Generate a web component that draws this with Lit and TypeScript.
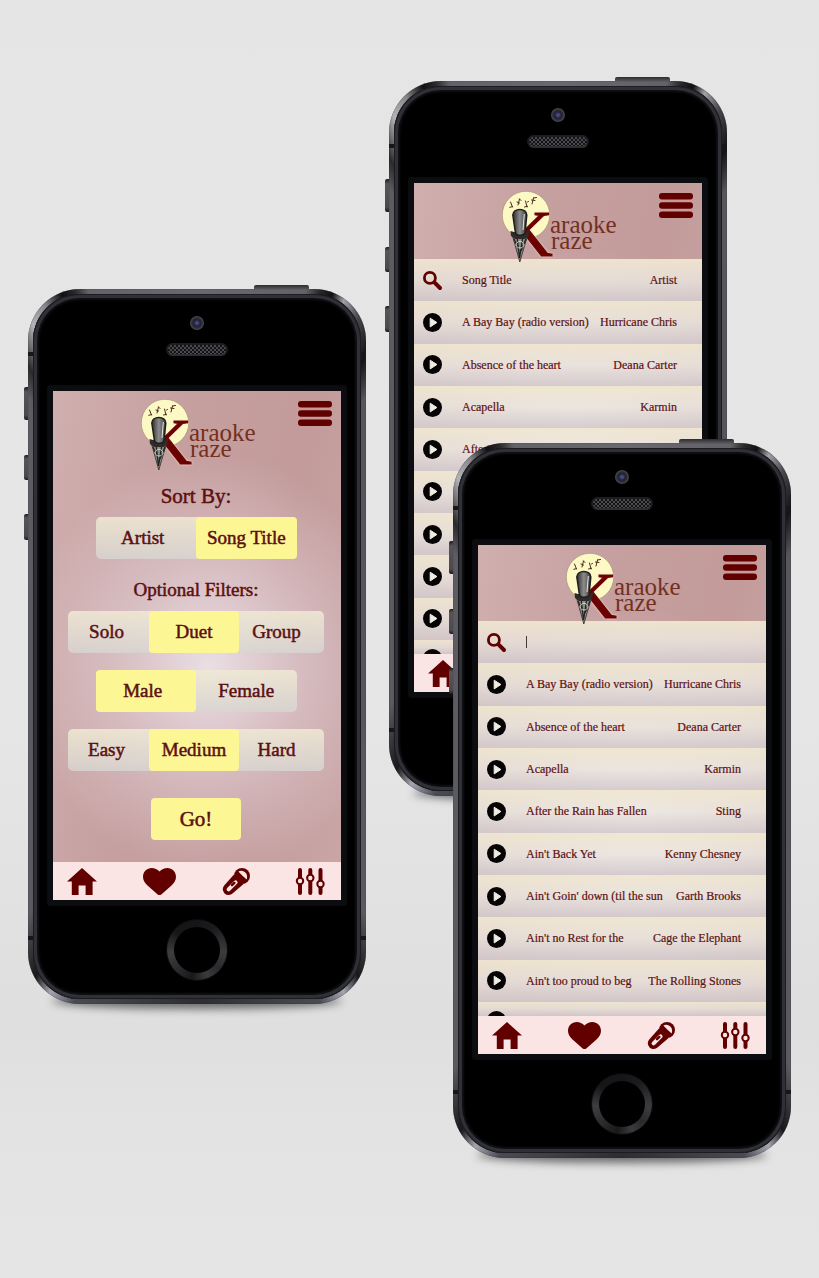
import { LitElement, html, css, svg, nothing } from "lit";
import { customElement, property, state } from "lit/decorators.js";

type Song = { title: string; artist: string };

const SONGS: Song[] = [
  { title: "A Bay Bay (radio version)", artist: "Hurricane Chris" },
  { title: "Absence of the heart", artist: "Deana Carter" },
  { title: "Acapella", artist: "Karmin" },
  { title: "After the Rain has Fallen", artist: "Sting" },
  { title: "Ain't Back Yet", artist: "Kenny Chesney" },
  { title: "Ain't Goin' down (til the sun", artist: "Garth Brooks" },
  { title: "Ain't no Rest for the", artist: "Cage the Elephant" },
  { title: "Ain't too proud to beg", artist: "The Rolling Stones" },
  { title: "", artist: "" },
];

const ICONS = {
  home: { w: 30, h: 27, art: svg`<path d="M15 0 30 13.4H25.6V27H18.6V17.6H11.6V27H4.8V13.4H0Z"/>` },
  heart: {
    w: 33,
    h: 27,
    art: svg`<path d="M16.5 3.6C18.6 1.2 21.400 0 24.200 0 29.200 0 33 3.800 33 8.800 33 12.400 31.200 15 28.500 17.600L18.300 26.400Q16.500 27.600 14.700 26.400L4.500 17.600C1.800 15 0 12.400 0 8.800 0 3.800 3.800 0 8.800 0 11.600 0 14.400 1.200 16.500 3.600Z"/>`,
  },
  mic: {
    w: 27,
    h: 27,
    art: svg`<circle cx="19.000" cy="8" r="8"/>
      <path d="M11 6.500 20.600 16 9.800 25.300A5.800 5.800 0 0 1 1.400 17.200Z"/>
      <path d="M5.600 21.400 12.600 14.400" fill="none" stroke="#fae4e4" stroke-width="4" stroke-linecap="round"/>
      <path d="M9 17.200 11.400 14.900" fill="none" stroke="#620000" stroke-width="2.400" stroke-linecap="round"/>
      <path d="M15.400 3.600C19.600 0.800 26 5.400 23.600 11.400 21.600 9.800 17.400 6.200 15.400 3.600Z" fill="#fae4e4"/>`,
  },
  sliders: {
    w: 29,
    h: 27,
    art: svg`<path d="M4 2V25M14.300 2V25M24.500 2V25" fill="none" stroke="#620000" stroke-width="4" stroke-linecap="round"/>
      <g fill="#fae4e4" stroke="#620000" stroke-width="2">
        <circle cx="4" cy="13" r="3.200"/><circle cx="14.300" cy="10" r="3.200"/><circle cx="24.500" cy="16" r="3.200"/>
      </g>`,
  },
  search: {
    w: 19,
    h: 19,
    art: svg`<circle cx="6.900" cy="6.900" r="5.500" fill="none" stroke="#620000" stroke-width="2.800"/>
      <path d="M11.400 11.400 17 17" fill="none" stroke="#620000" stroke-width="4" stroke-linecap="round"/>`,
  },
  play: {
    w: 19,
    h: 19,
    art: svg`<circle cx="9.500" cy="9.500" r="9.500" fill="#050304"/>
      <path d="M7.200 5.200 13.900 9.500 7.200 13.900Z" fill="#f1ece2" stroke="#f1ece2" stroke-width="1" stroke-linejoin="round"/>`,
  },
  menu: {
    w: 34,
    h: 25,
    art: svg`<rect width="34" height="6.400" rx="3"/><rect y="9.300" width="34" height="6.400" rx="3"/><rect y="18.600" width="34" height="6.400" rx="3"/>`,
  },
};

type IconName = keyof typeof ICONS;

const icon = (name: IconName) => {
  const { w, h, art } = ICONS[name];
  return html`<svg class="icon" width=${w} height=${h} viewBox="0 0 ${w} ${h}" aria-hidden="true">${art}</svg>`;
};

const controls = css`
  * {
    box-sizing: border-box;
  }
  button,
  input {
    font: inherit;
    color: inherit;
    margin: 0;
    padding: 0;
    border: 0;
    background: none;
  }
  button {
    cursor: pointer;
  }
  .icon {
    display: block;
    fill: #620000;
    overflow: visible;
  }
`;

/** The handset: metal rim, side keys, speaker, camera and home key around a slotted screen. */
@customElement("phone-frame")
export class PhoneFrame extends LitElement {
  static styles = css`
    * {
      box-sizing: border-box;
    }
    :host {
      display: block;
      width: 338px;
      isolation: isolate;
    }
    .body {
      position: relative;
      display: flex;
      flex-direction: column;
      padding: 0 25px;
      border-radius: 52px;
      background: conic-gradient(
        #68686e 0deg,
        #626268 17deg,
        #2a2a2c 19deg,
        #101012 21deg,
        #a2a2a6 23deg,
        #4a4a4e 26deg,
        #141416 30deg,
        #56565b 34deg,
        #55555b 90deg,
        #5a5a60 148deg,
        #19191b 154deg,
        #a6a6b0 157deg,
        #4a4a54 161deg,
        #2d2d33 180deg,
        #4a4a54 199deg,
        #a6a6b0 203deg,
        #19191b 206deg,
        #5a5a60 212deg,
        #5a5a60 270deg,
        #5c5c62 326deg,
        #2a2a2c 329deg,
        #b4b4b8 333deg,
        #88888c 336deg,
        #101012 339deg,
        #2a2a2c 341deg,
        #626268 343deg,
        #68686e 360deg
      );
      box-shadow: inset 0 0 1px 0 #1c1c20;
    }
    .body::before {
      content: "";
      position: absolute;
      inset: 5px;
      border-radius: 47px;
      background: #000;
      box-shadow: inset 0 0 0 1px #1c1c20, inset 0 0 0 4px #303137, inset 0 0 2px 6px #101115;
    }
    .body::after {
      content: "";
      position: absolute;
      z-index: -1;
      left: 24px;
      right: 24px;
      bottom: -5px;
      height: 16px;
      border-radius: 50%;
      background: #6a6a6a;
      filter: blur(4px);
    }
    .key {
      position: absolute;
      z-index: -1;
      left: -4px;
      width: 6px;
      border-radius: 2px;
      background: linear-gradient(#1c1c1e, #55555a 15%, #4a4a4e 85%, #1c1c1e);
    }
    .mute {
      top: 98px;
      height: 33px;
    }
    .up {
      top: 166px;
      height: 25px;
    }
    .down {
      top: 225px;
      height: 26px;
    }
    .power {
      left: 226px;
      top: -4px;
      width: 55px;
      height: 6px;
      background: linear-gradient(#2c2c30, #6a6a70);
    }
    .seam {
      position: absolute;
      left: 0;
      right: 0;
      height: 4px;
      border-left: 5px solid #17171a;
      border-right: 5px solid #17171a;
    }
    .seam.top {
      top: 63px;
    }
    .seam.bottom {
      bottom: 64px;
    }
    .forehead {
      position: relative;
      height: 102px;
      display: flex;
      flex-direction: column;
      align-items: center;
      gap: 13px;
      padding-top: 27px;
    }
    .camera {
      width: 14px;
      height: 14px;
      border-radius: 50%;
      background: radial-gradient(circle at 50% 50%, #4a4a80 0 12%, #22223c 30%, #2c2c36 50%, #46464c 65%, #25252a 100%);
    }
    .speaker {
      width: 62px;
      height: 13px;
      border-radius: 7px;
      border: 2px solid #1d1d20;
      border-bottom-color: #2e2e32;
      background: repeating-conic-gradient(#4a4a4e 0 25%, #141416 0 50%) 0 0 / 4px 4px;
    }
    .glass {
      position: relative;
      box-shadow: 0 0 1px 6px #0c0d10;
      border-radius: 1px;
    }
    .chin {
      position: relative;
      height: 104px;
      display: flex;
      justify-content: center;
      align-items: center;
      padding-bottom: 4px;
    }
    .home {
      width: 62px;
      height: 62px;
      border-radius: 50%;
      padding: 7px;
      border: 1px solid #0c0c0d;
      cursor: pointer;
      background: conic-gradient(#161618, #1c1c1e 40deg, #3c3c3e 95deg, #2a2a2c 130deg, #3a3a3d 160deg, #19191b 190deg, #303032 235deg, #3e3e41 265deg, #161618 310deg, #161618);
    }
    .home::before {
      content: "";
      display: block;
      height: 100%;
      border-radius: 50%;
      background: #000;
    }
  `;

  render() {
    return html`
      <div class="body">
        <span class="key power"></span>
        <span class="key mute"></span>
        <span class="key up"></span>
        <span class="key down"></span>
        <span class="seam top"></span>
        <span class="seam bottom"></span>
        <div class="forehead">
          <span class="camera"></span>
          <span class="speaker"></span>
        </div>
        <div class="glass"><slot></slot></div>
        <div class="chin"><button class="home" type="button" aria-label="Home"></button></div>
      </div>
    `;
  }
}

/** Logo bar, page content and tab bar, shared by every page of the app. */
@customElement("karaoke-screen")
export class KaraokeScreen extends LitElement {
  static styles = [
    controls,
    css`
      :host {
        display: flex;
        flex-direction: column;
        height: 509px;
        overflow: hidden;
        color: #5c1010;
        font-family: "Liberation Serif", "Times New Roman", serif;
        background: radial-gradient(ellipse 64% 42% at 54% 54%, rgba(236, 226, 232, 0.95), rgba(226, 208, 214, 0.6) 50%, rgba(210, 180, 182, 0) 100%),
          linear-gradient(100deg, #d0afaf 0%, #c59e9e 40%, #c39b9b 70%, #c9a6a6 100%);
      }
      .top {
        position: relative;
        z-index: 1;
        height: 76px;
        flex: none;
        display: grid;
        grid-template-columns: 1fr auto 1fr;
        align-items: start;
        padding: 5px 9px 0;
      }
      .logo {
        grid-column: 2;
        display: block;
        overflow: visible;
      }
      .letter {
        filter: drop-shadow(0 0 1px #f6e6cc);
      }
      .menu {
        justify-self: end;
        margin-top: 5px;
      }
      .content {
        flex: 1;
        min-height: 0;
        display: flex;
        flex-direction: column;
      }
      .tabs {
        flex: none;
        height: 38px;
        display: flex;
        justify-content: space-between;
        align-items: center;
        padding: 0 16px 0 14px;
        background: #fae4e4;
      }
    `,
  ];

  private logo() {
    return html`<svg class="logo" width="122" height="76" viewBox="-2 0 122 76" role="img" aria-label="Karaoke Kraze">
      <defs>
        <clipPath id="arms"><path d="M29 18H60V74H38L24 50Z" /></clipPath>
        <linearGradient id="metal">
          <stop offset="0" stop-color="#2b2b2b" />
          <stop offset="0.5" stop-color="#8c8c8c" />
          <stop offset="1" stop-color="#3a3a3a" />
        </linearGradient>
      </defs>
      <circle cx="27.000" cy="27" r="23.700" fill="#fdf9c4" stroke="#a08a70" stroke-width="0.600" />
      <g fill="none" stroke="#4a2a20" stroke-width="1" stroke-linecap="round">
        <path d="M11.500 14 13.500 19M10.800 19.300 13.500 18.600M20.500 11 19 17M20.500 11 22 12.500M18 14 20.500 15M26.500 13 28 19M25.500 19 28.500 18.300M28.500 14 29.500 13.500M34.500 10 33 16M34.500 10 37.500 9.500M32.500 12 36 12.500" />
      </g>
      <g font-family="Liberation Serif, Times New Roman, serif">
        <g class="letter">
          <g clip-path="url(#arms)">
            <text x="6" y="68" font-size="66" fill="#6b0000" stroke="#6b0000" stroke-width="1.200">K</text>
          </g>
        </g>
        <text x="51" y="45" font-size="25" fill="#74301f">araoke</text>
        <text x="52" y="61" font-size="25" fill="#74301f">raze</text>
      </g>
      <path d="M13 46 20.800 74 29 46Z" fill="#8d8d88" stroke="#2c2c2a" stroke-width="0.800" />
      <path d="M18 48 20.500 70 24 48M15 51 20 62M27 51 22 63" fill="none" stroke="#222" stroke-width="1.300" />
      <path d="M17 57C18 52 24 52 25 57 24 61 18 61 17 57Z" fill="none" stroke="#d6d6c8" stroke-width="1" />
      <path d="M11.500 43 15 44H27L30 42 29.500 48 26 51H16L12 48Z" fill="#2f2b29" />
      <path d="M13.800 27C13.800 19.500 28 19.500 27.800 27L26 45C25 48 17.500 48 16.500 45Z" fill="url(#metal)" stroke="#1e1e1e" stroke-width="1.500" />
      <path d="M25.300 26 24 42" stroke="#e6e6e0" stroke-width="1" fill="none" />
    </svg>`;
  }

  render() {
    const tabs: [IconName, string][] = [
      ["home", "Home"],
      ["heart", "Favorites"],
      ["mic", "Sing"],
      ["sliders", "Settings"],
    ];
    return html`
      <header class="top">
        ${this.logo()}
        <button class="menu" type="button" aria-label="Menu">${icon("menu")}</button>
      </header>
      <main class="content"><slot></slot></main>
      <nav class="tabs">
        ${tabs.map(([name, label]) => html`<button type="button" aria-label=${label}>${icon(name)}</button>`)}
      </nav>
    `;
  }
}

@customElement("sort-page")
export class SortPage extends LitElement {
  @state() private picks: Record<string, string> = {
    sort: "Song Title",
    group: "Duet",
    voice: "Male",
    level: "Medium",
  };

  static styles = [
    controls,
    css`
      :host {
        display: block;
      }
      .form {
        display: flex;
        flex-direction: column;
        align-items: center;
        padding: 17px 17px 0 15px;
        -webkit-text-stroke: 0.5px #5c1010;
      }
      .heading {
        margin: 0 0 9px;
        font-size: 19px;
        line-height: 24px;
        font-weight: 400;
      }
      .heading.main {
        font-size: 21px;
      }
      .choice {
        display: grid;
        width: 256px;
        max-width: 100%;
        height: 42px;
        margin-bottom: 17px;
        border-radius: 5px;
        background: linear-gradient(rgba(240, 234, 212, 0.85), rgba(216, 214, 210, 0.8));
        font-size: 19px;
        line-height: 42px;
      }
      .three {
        grid-template-columns: 81fr 90fr 85fr;
      }
      .three .option:first-child {
        padding-right: 4px;
      }
      .three .option:last-child {
        padding-right: 10px;
      }
      .two {
        width: 201px;
        grid-template-columns: 1fr 1fr;
      }
      .two .option:first-child {
        padding-right: 6px;
      }
      .sort {
        margin-bottom: 19px;
      }
      .option.on {
        background: #fdf695;
        border-radius: 4px;
      }
      .go {
        width: 90px;
        height: 42px;
        margin-top: 10px;
        border-radius: 4px;
        background: #fdf695;
        font-size: 21px;
      }
    `,
  ];

  private choice(key: string, label: string, options: string[], cls: string) {
    return html`<div class="choice ${cls}" role="group" aria-label=${label}>
      ${options.map(
        (o) => html`<button
          type="button"
          class="option ${this.picks[key] === o ? "on" : ""}"
          aria-pressed=${this.picks[key] === o}
          @click=${() => (this.picks = { ...this.picks, [key]: o })}
        >${o}</button>`
      )}
    </div>`;
  }

  render() {
    return html`<div class="form">
      <h1 class="heading main">Sort By:</h1>
      ${this.choice("sort", "Sort by", ["Artist", "Song Title"], "two sort")}
      <h2 class="heading">Optional Filters:</h2>
      ${this.choice("group", "Group size", ["Solo", "Duet", "Group"], "three")}
      ${this.choice("voice", "Voice", ["Male", "Female"], "two")}
      ${this.choice("level", "Difficulty", ["Easy", "Medium", "Hard"], "three")}
      <button class="go" type="button">Go!</button>
    </div>`;
  }
}

@customElement("song-page")
export class SongPage extends LitElement {
  @property({ type: Boolean }) searching = false;

  static styles = [
    controls,
    css`
      :host {
        flex: 1;
        min-height: 0;
        display: flex;
      }
      .list {
        flex: 1;
        display: grid;
        grid-template-rows: repeat(9, 1fr) 14px;
        margin: 0;
        padding: 0;
        list-style: none;
        font-size: 12px;
        line-height: 16px;
        background: radial-gradient(ellipse 75% 55% at 55% 50%, #f3eff2, #dfcfd0 100%);
        -webkit-text-stroke: 0.2px #5c1010;
      }
      .row {
        min-height: 0;
        overflow: hidden;
        display: grid;
        grid-template-columns: 19px 1fr auto;
        column-gap: 20px;
        align-items: center;
        padding: 0 25px 0 9px;
        white-space: nowrap;
        background: linear-gradient(rgba(240, 230, 205, 0.85), rgba(232, 226, 214, 0.55) 50%, rgba(205, 194, 197, 0.75));
      }
      .row > :nth-child(3) {
        margin-left: -20px;
      }
      .row:last-child {
        align-items: start;
        padding-top: 9px;
      }
      .field {
        display: flex;
        align-items: center;
        min-width: 0;
      }
      .field input {
        flex: 1;
        min-width: 0;
        outline: none;
      }
      .field input::placeholder {
        color: inherit;
        opacity: 1;
      }
      .caret {
        width: 1px;
        height: 12px;
        background: #4a3a34;
      }
    `,
  ];

  render() {
    return html`<ul class="list">
      <li class="row">
        ${icon("search")}
        <div class="field">
          ${this.searching ? html`<span class="caret"></span>` : nothing}
          <input type="text" aria-label="Search songs" placeholder=${this.searching ? "" : "Song Title"} />
        </div>
        ${this.searching ? nothing : html`<span>Artist</span>`}
      </li>
      ${SONGS.map(
        (s) => html`<li class="row">
          <button type="button" aria-label="Play ${s.title}">${icon("play")}</button>
          <span>${s.title}</span>
          <span>${s.artist}</span>
        </li>`
      )}
    </ul>`;
  }
}

@customElement("app-root")
export class AppRoot extends LitElement {
  static styles = css`
    :host {
      display: block;
      min-height: 100vh;
      background: linear-gradient(#e5e5e5 0%, #e6e6e6 55%, #dfdfdf 80%, #e3e3e3 88%, #e5e5e5 100%);
    }
    .board {
      position: relative;
      max-width: 819px;
      min-height: 1278px;
      margin: 0 auto;
      overflow: hidden;
    }
    .phone {
      position: absolute;
    }
    .sort {
      left: 28px;
      top: 289px;
    }
    .browse {
      left: 389px;
      top: 81px;
    }
    .search {
      left: 453px;
      top: 443px;
    }
  `;

  render() {
    return html`<div class="board">
      <phone-frame class="phone sort">
        <karaoke-screen><sort-page></sort-page></karaoke-screen>
      </phone-frame>
      <phone-frame class="phone browse">
        <karaoke-screen><song-page></song-page></karaoke-screen>
      </phone-frame>
      <phone-frame class="phone search">
        <karaoke-screen><song-page searching></song-page></karaoke-screen>
      </phone-frame>
    </div>`;
  }
}
